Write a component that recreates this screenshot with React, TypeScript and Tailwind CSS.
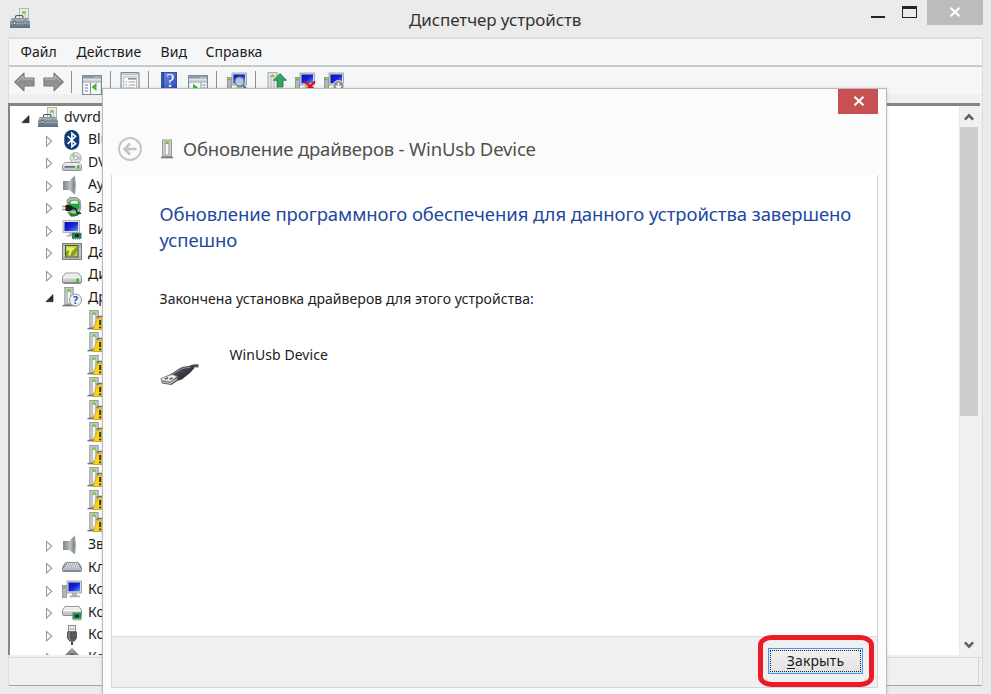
import type { ReactNode } from "react";

type IconProps = { className?: string };

function Svg({ className = "", w = 20, h = 20, children }: { className?: string; w?: number; h?: number; children: ReactNode }) {
  return (
    <svg width={w} height={h} viewBox={`0 0 ${w} ${h}`} fill="none" className={`block shrink-0 ${className}`}>
      {children}
    </svg>
  );
}

function Gradients() {
  return (
    <svg width="0" height="0" className="absolute">
      <defs>
        <linearGradient id="metal" x1="0" y1="0" x2="1" y2="0">
          <stop offset="0" stopColor="#cfd4d8" />
          <stop offset="0.5" stopColor="#a4abb0" />
          <stop offset="1" stopColor="#6f777d" />
        </linearGradient>
        <linearGradient id="grayArrow" x1="0" y1="0" x2="0" y2="1">
          <stop offset="0" stopColor="#aaaaaa" />
          <stop offset="0.5" stopColor="#8b8b8b" />
          <stop offset="1" stopColor="#a6a6a6" />
        </linearGradient>
        <linearGradient id="drive" x1="0" y1="0" x2="0" y2="1">
          <stop offset="0" stopColor="#fbfbfb" />
          <stop offset="1" stopColor="#b4b8b9" />
        </linearGradient>
        <linearGradient id="screen" x1="0" y1="0" x2="1" y2="1">
          <stop offset="0" stopColor="#0712a8" />
          <stop offset="0.5" stopColor="#1322d8" />
          <stop offset="1" stopColor="#6f92f8" />
        </linearGradient>
        <linearGradient id="box" x1="0" y1="0" x2="0" y2="1">
          <stop offset="0" stopColor="#b3c0c8" />
          <stop offset="0.5" stopColor="#7d8f98" />
          <stop offset="1" stopColor="#5b6e7a" />
        </linearGradient>
        <linearGradient id="help" x1="0" y1="0" x2="1" y2="1">
          <stop offset="0" stopColor="#6f8fe6" />
          <stop offset="1" stopColor="#2444b4" />
        </linearGradient>
        <linearGradient id="cable" x1="0" y1="0" x2="1" y2="1">
          <stop offset="0" stopColor="#777a80" />
          <stop offset="0.5" stopColor="#3b3d44" />
          <stop offset="1" stopColor="#202127" />
        </linearGradient>
      </defs>
    </svg>
  );
}

function ToolboxIcon({ className }: IconProps) {
  return (
    <Svg className={className}>
      <rect x="9.5" y="0.5" width="9" height="12" fill="#e9eae8" stroke="#b5b7b5" />
      <path d="M12.5 3v7M15.5 3v7" stroke="#c4c6c4" />
      <path d="M11.8 5.5l2.2-3 2.2 3z" fill="#66c92e" />
      <path d="M5.5 10.500V9Q5.500 7.500 7 7.500h4.500Q13 7.500 13 9v1.500" stroke="#4d575d" strokeWidth="1.200" />
      <path d="M1.500 10.200h17l1.500 4V20H0v-5.800z" fill="url(#box)" />
      <path d="M1.500 10.700h17" stroke="#6d7d86" strokeWidth=".8" />
      <path d="M.5 14.300h19" stroke="#52636d" strokeWidth=".8" />
      <path d="M.5 15.200h19" stroke="#a9b7bf" strokeWidth=".8" />
      <rect x="3.800" y="13" width="1.700" height="3.800" fill="#e5ebee" stroke="#4b5a63" strokeWidth=".6" />
      <rect x="14.200" y="13" width="1.700" height="3.800" fill="#e5ebee" stroke="#4b5a63" strokeWidth=".6" />
    </Svg>
  );
}

function BluetoothIcon() {
  return (
    <Svg>
      <rect x="2.3" y="0" width="15" height="20" rx="7.4" fill="#103a78" />
      <path d="M5.6 6l8 7.6-3.7 3.2V3.2l3.7 3.1-8 7.5" stroke="#fff" strokeWidth="1.6" />
    </Svg>
  );
}

function DvdIcon() {
  return (
    <Svg>
      <circle cx="13.7" cy="6" r="5.6" fill="#dcdedc" stroke="#a3a6a3" strokeWidth=".8" />
      <path d="M13.7 6L9 3.2A5.5 5.5 0 0 1 12 .8z" fill="#9bd67c" />
      <path d="M13.7 6l5-1.7a5.5 5.5 0 0 1-.2 4z" fill="#c2b9d4" />
      <circle cx="13.7" cy="6" r="1.8" fill="#fff" stroke="#919491" strokeWidth=".8" />
      <path d="M3 10.5h14l2.5 3v4q0 1-1 1h-17q-1 0-1-1v-4z" fill="url(#drive)" stroke="#7c8081" strokeWidth=".8" />
      <rect x="2.5" y="14" width="10.500" height="1.800" fill="#6a7174" />
      <rect x="15.3" y="13.2" width="2" height="3.3" fill="#35a51f" />
    </Svg>
  );
}

function SpeakerIcon() {
  return (
    <Svg>
      <path d="M1.500 6.500h5.500v8H1.500z" fill="#8b9397" stroke="#697175" strokeWidth=".7" />
      <path d="M6.500 6.500L12.500 1q1 9 0 18L6.500 14.500z" fill="url(#metal)" />
      <path d="M12.300.6q2 9.400 0 18.800" stroke="#9aa1a6" strokeWidth="1.100" />
      <path d="M5 6.500v8" stroke="#c9ced1" strokeWidth=".8" />
    </Svg>
  );
}

function BatteryIcon() {
  return (
    <Svg>
      <path d="M5 3l2.500-2.500h7L18 3l1 8-3 7-7 1.500L6 16z" fill="#b3b7b4" stroke="#747874" strokeWidth=".7" />
      <path d="M6.500 5q6-4.500 11 0v6.500q-5 4.500-11 0z" fill="#23a63a" />
      <path d="M8.500 4.500q4-2 7.500 0v2.200H8.500z" fill="#dff3df" />
      <path d="M7 14.500q5 5 10.500-.5v3q-4 4-9.500 1.500z" fill="#158427" />
      <path d="M0 9.500h4M0 12.500h4" stroke="#b79a5c" strokeWidth="1.300" />
      <path d="M3.500 8h3.500q4 .5 4 3T7 14H3.500z" fill="#1d1f1e" />
      <path d="M10.500 11q4 0 4 2.800t4.500 2.500" stroke="#222" strokeWidth="1.500" />
    </Svg>
  );
}

function DisplayIcon() {
  return (
    <Svg>
      <rect x="1" y="0.500" width="16.500" height="12" fill="#dadcdd" stroke="#a6a9ab" strokeWidth=".8" />
      <rect x="2.500" y="2" width="13.500" height="9" fill="url(#screen)" />
      <path d="M7 12.500h4.500v2.500H14v1.500H4.500V15H7z" fill="#b4b8ba" />
      <rect x="10" y="12.800" width="9.500" height="6" fill="#247f68" />
      <rect x="13" y="14" width="4" height="3" fill="#10322c" />
      <path d="M11 19.300h7" stroke="#c3a951" strokeDasharray="1 1" />
    </Svg>
  );
}

function SensorIcon() {
  return (
    <Svg>
      <rect x=".5" y="1.500" width="19" height="16" fill="#b3b6b4" stroke="#7a7e7d" />
      <rect x="3.500" y="3.500" width="12.500" height="11.500" fill="#c3ce48" stroke="#4b5734" strokeWidth="1" />
      <path d="M4 9.500l4-2 2 2 5.500-5.500v4.500L11 14.500H4z" fill="#7f9b34" />
      <path d="M5 5.500h8.500L10 9l-2 5-2-1 1.500-4-2.500-1z" fill="#f5ee40" />
      <path d="M2 5v9M18 6v8" stroke="#eef0ef" strokeDasharray="2 1.500" />
      <circle cx="18" cy="4" r=".8" fill="#74d744" />
    </Svg>
  );
}

function DiskIcon() {
  return (
    <Svg>
      <path d="M3.500 8h13l3 4v5q0 1.200-1.200 1.200H1.700Q.5 18.200.5 17v-5z" fill="url(#drive)" stroke="#8b8f90" strokeWidth=".9" />
      <path d="M1 12.300h18" stroke="#fff" />
      <path d="M1.500 18h17" stroke="#5f6567" />
      <rect x="14.300" y="13.500" width="2.500" height="3.500" fill="#4ab324" />
    </Svg>
  );
}

function PlugDevice() {
  return (
    <>
      <rect x="2.800" y=".5" width="8.400" height="17" fill="#c6c9c8" stroke="#8f9392" strokeWidth=".9" />
      <rect x="5.400" y="2.500" width="3.200" height="13.500" fill="#f4f5f4" stroke="#a5a9a7" strokeWidth=".6" />
      <path d="M4.300 4.800L7 2l2.700 2.800z" fill="#68cb2c" />
      <path d="M.5 18.600h14" stroke="#707675" strokeWidth="1.500" />
    </>
  );
}

function OtherDeviceIcon() {
  return (
    <Svg>
      <PlugDevice />
      <circle cx="13.500" cy="13" r="6" fill="#eef2f7" stroke="#8a98a7" />
      <text x="13.500" y="16.800" textAnchor="middle" fontSize="10.500" fontWeight="700" fill="#254eb6" className="font-['Noto_Sans',sans-serif]">?</text>
    </Svg>
  );
}

function WarnDeviceIcon() {
  return (
    <Svg>
      <PlugDevice />
      <path d="M9.500 7.500l2.500-1h3" stroke="#6c7170" strokeWidth="1.600" />
      <path d="M6 19.500L9.500 10q1-2.200 3.500-2.200h6.500v11.700z" fill="#f3d222" stroke="#c69c11" strokeWidth=".7" />
      <path d="M12.200 10h1.900v5h-1.900zM12.200 16.400h1.900v1.800h-1.900z" fill="#3a350c" />
    </Svg>
  );
}

function KeyboardIcon() {
  return (
    <Svg>
      <path d="M4.500 5h11Q17 5 20 10.500V13q0 2-2 2H2q-2 0-2-2v-2.500Q3 5 4.500 5z" fill="#858a97" />
      <path d="M4.500 6h11l2.500 4.800H2z" fill="#d7d9df" />
      <path d="M4 7.300h12.500M3 9.200h14.500" stroke="#8a90a0" strokeDasharray="1 1" />
      <path d="M1 12h18" stroke="#eceef2" />
    </Svg>
  );
}

function Computer() {
  return (
    <>
      <rect x=".5" y="5.500" width="4" height="12" fill="#b4b8b7" stroke="#7c8180" strokeWidth=".7" />
      <path d="M1 7.500h2.500" stroke="#55c12b" strokeWidth="1.500" />
      <rect x="5" y="1" width="14.500" height="12" fill="#d4d6d7" stroke="#999d9f" strokeWidth=".8" />
      <rect x="6.500" y="2.500" width="11.500" height="8.800" fill="url(#screen)" />
      <path d="M10 13h5v2.500h3v1.700H7.500v-1.700H10z" fill="#adb1b3" />
    </>
  );
}

function ComputerIcon() {
  return (
    <Svg>
      <Computer />
    </Svg>
  );
}

function ControllerIcon() {
  return (
    <Svg>
      <path d="M3 4.500h14l2.500 3.500v4.500q0 1-1 1h-17q-1 0-1-1V8z" fill="url(#drive)" stroke="#858a8b" strokeWidth=".9" />
      <path d="M1 8.500h18" stroke="#fff" />
      <path d="M10.500 10.500h9v7h-9z" fill="#28875b" />
      <path d="M13 12.500h4v3h-4z" fill="#0e3727" />
      <path d="M10.500 12h9M10.500 16.500h9" stroke="#65c092" strokeDasharray="1 1" strokeWidth=".8" />
      <path d="M11.500 18.300h7" stroke="#bca453" strokeDasharray="1 1" />
    </Svg>
  );
}

function UsbIcon() {
  return (
    <Svg>
      <rect x="6.500" y=".5" width="7" height="6" fill="#eeeeef" stroke="#85878b" />
      <path d="M8.700 3v1.800M11.300 3v1.800" stroke="#888a8e" />
      <path d="M5 6.500h10v6.500l-2.500 3.500h-5L5 13z" fill="#57585c" />
      <path d="M7 7v6l1.500 2.500" stroke="#9b9ca0" />
      <path d="M10 16.500V20" stroke="#46474a" strokeWidth="2" />
    </Svg>
  );
}

function MouseIcon() {
  return (
    <Svg>
      <path d="M2.500 8.500L10 1l7.500 7.500-3 1L10 5.500 5.500 9.500z" fill="#828486" />
      <path d="M6 12V9l4-3.500L14 9v3z" fill="#4d4f52" />
      <path d="M10 1.500v5" stroke="#bfc1c3" />
    </Svg>
  );
}

function BigArrow({ flip = false }: { flip?: boolean }) {
  return (
    <Svg h={20} w={21} className={flip ? "-scale-x-100" : ""}>
      <path d="M.8 10L10 1.200V6h10v8H10v4.800z" fill="url(#grayArrow)" stroke="#767676" strokeWidth="1.100" strokeLinejoin="round" />
      <path d="M2.800 10L9 4v3h10" stroke="#c5c5c5" strokeWidth=".8" />
    </Svg>
  );
}

function PaneIcon({ flip = false }: { flip?: boolean }) {
  return (
    <Svg>
      <rect x=".6" y=".6" width="18.800" height="19" fill="#f7f8f9" stroke="#7c8794" strokeWidth="1.100" />
      <rect x="1" y="1" width="18" height="2.600" fill="#8999ab" />
      <path d="M12.500 2.300h5" stroke="#e7ebef" strokeDasharray="1 1" />
      <path d="M1 5.200h18" stroke="#c3cad2" strokeWidth="1.300" />
      <path d="M1 7h18" stroke="#8593a3" />
      {flip ? (
        <>
          <path d="M13 7.500v12" stroke="#8593a3" />
          <path d="M14.500 10h3M14.500 13h3M14.500 16h3" stroke="#5f86b4" />
          <path d="M5 8.500l5 4-5 4z" fill="#49b528" />
        </>
      ) : (
        <>
          <path d="M8.500 7.500v12" stroke="#8593a3" />
          <path d="M3 10h3M3 13h3M3 16h3" stroke="#5f86b4" />
          <path d="M14.500 8l-5 4 5 4z" fill="#49b528" />
        </>
      )}
    </Svg>
  );
}

function PropertiesIcon() {
  return (
    <Svg>
      <rect x="1" y=".6" width="18" height="19" rx=".8" fill="#eceef0" stroke="#7d858e" strokeWidth="1.100" />
      <path d="M2 2.500h16" stroke="#b6bdc5" />
      <rect x="3.800" y="5" width="12.500" height="12" fill="#fff" stroke="#a1a8b0" strokeWidth=".8" />
      <path d="M8 6.800h8" stroke="#7d8996" strokeWidth="1.500" />
      <path d="M5.500 10h1.500M5.500 13h1.500" stroke="#3e9bd3" />
      <path d="M8.500 10h6.500M8.500 13h6.500M5.500 16h9" stroke="#98a0a8" />
    </Svg>
  );
}

function HelpIcon() {
  return (
    <Svg w={16}>
      <rect x=".4" y=".4" width="15.200" height="19.200" fill="url(#help)" stroke="#24409c" strokeWidth=".8" />
      <path d="M2.200 0v20" stroke="#233e9b" strokeWidth="1.600" />
      <text x="9.200" y="15.300" textAnchor="middle" fontSize="18" fill="#fff" className="font-['Liberation_Serif',serif]">?</text>
    </Svg>
  );
}

function ScanIcon() {
  return (
    <Svg w={21}>
      <Computer />
      <circle cx="12.500" cy="9.500" r="4.500" fill="#b9d3ea" fillOpacity=".9" stroke="#76848f" strokeWidth="1.300" />
      <path d="M15.500 13l3.500 3.500" stroke="#77706a" strokeWidth="2.200" />
    </Svg>
  );
}

function UpdateIcon() {
  return (
    <Svg>
      <rect x="1" y=".6" width="9" height="17" fill="#e4e6e4" stroke="#a0a4a2" />
      <path d="M4 3v14M7 3v14" stroke="#b9bcba" />
      <path d="M3 5l2.500-3L8 5z" fill="#69c833" />
      <path d="M13 1.500l6.500 6.800H16V15h-5.500V8.300H6.500z" fill="#34a567" stroke="#17754a" strokeWidth=".8" />
    </Svg>
  );
}

function UninstallIcon() {
  return (
    <Svg w={21}>
      <Computer />
      <path d="M10 10l10 8M20 9.500L10.500 19" stroke="#dc141b" strokeWidth="2.300" />
    </Svg>
  );
}

function DisableIcon() {
  return (
    <Svg w={21}>
      <Computer />
      <circle cx="14.500" cy="14" r="5.500" fill="#8f9191" stroke="#e4e5e5" />
      <path d="M14.500 10.500v6M11.800 13.800l2.700 2.900 2.700-2.900" stroke="#fff" strokeWidth="1.600" />
    </Svg>
  );
}

function UsbPlugPicture() {
  return (
    <Svg w={41} h={24}>
      <path d="M29 5.500q3-3.500 9.500-2.500" stroke="#4a4c53" strokeWidth="3" />
      <path d="M10 11.500L20 5q3-1.800 7-1.800l6-.7 1.500 2.500-4 4.500-8 6.500q-4 2.500-8 1.300z" fill="url(#cable)" />
      <path d="M13 10.800l8.500-5q4-1.300 9-1.300" stroke="#8c8f96" strokeWidth="1" />
      <path d="M.5 15.500L12 10.500l6.500 2.500-.5 4.500L11.500 22 2 20.500z" fill="#55575c" />
      <path d="M1.500 15.500L12 11.500l5 2-6.500 5.300-9-1.300z" fill="#eeeef0" stroke="#8a8b90" strokeWidth=".6" />
      <path d="M5 16l3-1M9.500 16.300l3-1.300" stroke="#55565a" strokeWidth="1.500" />
      <path d="M2 19l8.500 1.300 6.500-4.500" stroke="#c6c7ca" strokeWidth="1.100" />
    </Svg>
  );
}

function Expander({ open = false }: { open?: boolean }) {
  return (
    <Svg w={9} h={12}>
      {open ? <path d="M8 2.500v7.200H.8z" fill="#303030" stroke="#1c1c1c" strokeWidth=".6" /> : <path d="M1.500 1.500v9.500l5.300-4.750z" fill="#fff" stroke="#9c9c9c" strokeWidth="1.100" />}
    </Svg>
  );
}

const categories: { icon: ReactNode; label: string; open?: boolean }[] = [
  { icon: <BluetoothIcon />, label: "Bluetooth" },
  { icon: <DvdIcon />, label: "DVD-дисководы" },
  { icon: <SpeakerIcon />, label: "Аудиовходы" },
  { icon: <BatteryIcon />, label: "Батареи" },
  { icon: <DisplayIcon />, label: "Видеоадаптеры" },
  { icon: <SensorIcon />, label: "Датчики" },
  { icon: <DiskIcon />, label: "Дисковые" },
  { icon: <OtherDeviceIcon />, label: "Другие", open: true },
];

const lowerCategories: { icon: ReactNode; label: string }[] = [
  { icon: <SpeakerIcon />, label: "Звуковые" },
  { icon: <KeyboardIcon />, label: "Клавиатуры" },
  { icon: <ComputerIcon />, label: "Компьютер" },
  { icon: <ControllerIcon />, label: "Контроллеры" },
  { icon: <UsbIcon />, label: "Контроллеры" },
  { icon: <MouseIcon />, label: "Контроллеры" },
];

function Category({ icon, label, open }: { icon: ReactNode; label: string; open?: boolean }) {
  return (
    <div className="flex h-[22.5px] shrink-0 items-center pl-[35px]">
      <div className="mr-2 pt-[2px]">
        <Expander open={open} />
      </div>
      {icon}
      <span className="-mt-px ml-[6px] leading-5">{label}</span>
    </div>
  );
}

function Separator({ className }: IconProps) {
  return <div className={`h-[22px] w-px shrink-0 bg-[#8f9092] ${className}`} />;
}

function Chevron({ down = false }: { down?: boolean }) {
  return (
    <Svg w={10} h={8} className={down ? "-scale-y-100" : ""}>
      <path d="M.9 6.700L5 2.300l4.100 4.400" stroke="#606060" strokeWidth="2.500" />
    </Svg>
  );
}

function Cross({ className }: IconProps) {
  return (
    <Svg w={12} h={10} className={className}>
      <path d="M1.500.8l9 8.400M10.500.8l-9 8.400" stroke="#fff" strokeWidth="2.100" />
    </Svg>
  );
}

function UpdateDialog() {
  return (
    <div className="absolute left-[102px] top-[88px] flex h-[606px] w-[785px] flex-col border border-b-0 border-[#b9babb] bg-[#fbfbfb] shadow-[0_0_3px_rgba(0,0,0,0.15)]">
      <div className="flex h-[25px] shrink-0 justify-end pr-2">
        <button className="flex w-10 items-center justify-center bg-[#c75050] pl-px">
          <Cross className="-mt-px" />
        </button>
      </div>
      <div className="flex h-[61px] shrink-0 items-center pl-[15px] pt-2">
        <Svg w={24} h={24}>
          <circle cx="12" cy="12" r="11" stroke="#c6c6c6" strokeWidth="1.900" />
          <path d="M18.500 12H7M12 6.500L6.500 12l5.500 5.500" stroke="#c3c3c3" strokeWidth="2.500" />
        </Svg>
        <Svg w={14} h={20} className="ml-[18px]">
          <rect x="2.500" y="1" width="9" height="16.500" fill="#c9cccb" stroke="#999d9c" />
          <rect x="5.200" y="3" width="3.600" height="13" fill="#f7f7f7" stroke="#959998" strokeWidth=".7" />
          <path d="M4.500 5L7 2.300 9.500 5z" fill="#70c531" />
          <path d="M1 18.500h12" stroke="#747979" strokeWidth="1.600" />
        </Svg>
        <h2 className="ml-[9px] whitespace-nowrap text-[18.5px] leading-6 tracking-[-0.17px] text-[#505050]">Обновление драйверов - WinUsb Device</h2>
      </div>
      <div className="mx-2 flex h-[513px] flex-col border border-t-0 border-[#d5d5d5] bg-white">
        <div className="flex-1 pl-[47.5px] pt-[26px] text-[14px] text-[#1c1c1c]">
          <h1 className="whitespace-nowrap text-[18.5px] leading-[26px] tracking-[-0.08px] text-[#2148a0]">
            <span className="block">Обновление программного обеспечения для данного устройства завершено</span>
            <span className="block">успешно</span>
          </h1>
          <p className="mt-[36px] leading-5 tracking-[0.06px]">Закончена установка драйверов для этого устройства:</p>
          <div className="mt-9 flex">
            <div className="mt-[18px]">
              <UsbPlugPicture />
            </div>
            <p className="ml-[29px] leading-5 tracking-[0.06px]">WinUsb Device</p>
          </div>
        </div>
        <div className="flex h-[51px] shrink-0 items-end justify-end border-t border-[#dddddd] bg-[#f0f0f0]">
          <div className="mr-[3px] flex h-[52px] w-[116px] shrink-0 items-center justify-center rounded-[14px/10px] border-[5px] border-[#ed1c24] pr-px">
            <button className="flex h-[26px] w-[95px] border border-[#3c99f5] bg-gradient-to-b from-[#f1f1f1] to-[#e2e2e2] p-px text-[14px] text-[#1c1c1c]">
              <span className="flex flex-1 items-center justify-center self-stretch border border-dotted border-[#222]">
                <span className="leading-5 tracking-[0.1px]">
                  <u className="underline-offset-2">З</u>акрыть
                </span>
              </span>
            </button>
          </div>
        </div>
      </div>
    </div>
  );
}

export default function App() {
  return (
    <div className="relative flex h-[694px] w-[992px] flex-col overflow-hidden border-r border-[#d2d2d2] bg-[#ebebeb] font-['Noto_Sans','Open_Sans',sans-serif] text-[14px] text-[#1c1c1c]">
      <Gradients />
      <header className="flex h-[37px] shrink-0 items-start">
        <ToolboxIcon className="ml-[10px] mt-2" />
        <h1 className="ml-[379px] mt-2 w-[172px] whitespace-nowrap text-[17px] leading-6 tracking-[-0.1px] text-[#333]">Диспетчер устройств</h1>
        <div className="ml-[290px] mt-4 h-[2px] w-[14px] bg-[#242424]" />
        <div className="ml-[17px] mt-[6px] h-3 w-[15px] border border-t-[3px] border-[#242424]" />
        <button className="ml-[10px] flex h-[25px] w-14 items-center justify-center bg-[#bcbcbc]">
          <Cross className="-mt-px" />
        </button>
      </header>

      <main className="ml-2 flex h-[649px] w-[975px] shrink-0 flex-col border border-b-0 border-t-2 border-[#dcdcdc] bg-[#f0f0f0]">
        <nav className="flex h-[28px] shrink-0 items-center border-b-2 border-[#c8c9cb] bg-[#f5f6f8] pb-[2px] pl-[11.5px] tracking-[0.05px]">
          <span className="w-14">Файл</span>
          <span className="w-[84px]">Действие</span>
          <span className="w-[45px]">Вид</span>
          <span>Справка</span>
        </nav>
        <div className="flex h-[27px] shrink-0 items-start bg-[#f5f6f8] pl-[5px] pt-1">
          <div className="mt-[1px] flex gap-2">
            <BigArrow />
            <BigArrow flip />
          </div>
          <Separator className="ml-[7px]" />
          <div className="ml-[10px] mt-1"><PaneIcon /></div>
          <Separator className="ml-2" />
          <div className="ml-[9px] mt-px"><PropertiesIcon /></div>
          <Separator className="ml-2" />
          <div className="ml-3 mt-px"><HelpIcon /></div>
          <div className="ml-[11px] mt-1"><PaneIcon flip /></div>
          <Separator className="ml-2" />
          <div className="ml-[10px] mt-px"><ScanIcon /></div>
          <Separator className="ml-[7px]" />
          <div className="ml-[11px] mt-px"><UpdateIcon /></div>
          <div className="ml-2 mt-px"><UninstallIcon /></div>
          <div className="ml-2 mt-px"><DisableIcon /></div>
        </div>
        <section className="-ml-px mt-[9px] flex h-[552px] w-[972px] shrink-0 border-l-2 border-t-[3px] border-[#858585] bg-white">
          <div className="flex flex-1 flex-col overflow-hidden">
            <div className="flex h-[22.5px] shrink-0 items-center pl-[11px]">
              <div className="mr-2 pt-[3px]">
                <Expander open />
              </div>
              <ToolboxIcon />
              <span className="-mt-px ml-[6px] leading-5">dvvrd</span>
            </div>
            {categories.map((c, i) => (
              <Category key={i} {...c} />
            ))}
            {Array.from({ length: 10 }, (_, i) => (
              <div key={i} className="flex h-[22.5px] shrink-0 items-center pl-[77px]">
                <WarnDeviceIcon />
              </div>
            ))}
            {lowerCategories.map((c, i) => (
              <Category key={i} {...c} />
            ))}
          </div>
          <div className="flex w-[21px] flex-col items-center border-l border-[#e9e9e9] bg-[#f0f0f0] pr-[2px]">
            <div className="flex h-[21px] items-center pt-px">
              <Chevron />
            </div>
            <div className="h-[289px] w-[18px] bg-[#cdcdcd]" />
            <div className="mb-[6px] mt-auto">
              <Chevron down />
            </div>
          </div>
        </section>
        <footer className="mt-[2px] flex flex-1 justify-end border-b border-t border-b-[#a5a5a5] border-t-[#dadada]">
          <div className="mr-[3px] w-px bg-[#d4d4d4]" />
        </footer>
      </main>
      <UpdateDialog />
    </div>
  );
}
